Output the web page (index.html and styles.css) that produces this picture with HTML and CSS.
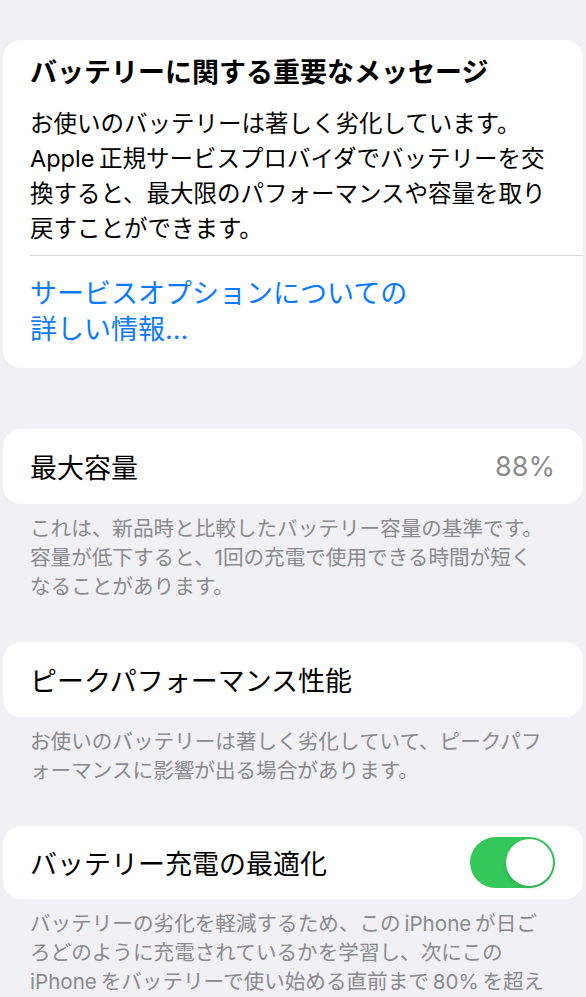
FILE: index.html
```html
<!DOCTYPE html>
<html lang="ja">
<head>
    <meta charset="UTF-8">
    <meta name="viewport" content="width=device-width, initial-scale=1.0">
    <title>バッテリーの状態と充電</title>
    <link rel="stylesheet" href="styles.css">
</head>
<body>
<div class="page">
    <section class="card notice">
        <h1 class="notice-title">バッテリーに関する重要なメッセージ</h1>
        <p class="notice-text">お使いのバッテリーは著しく劣化しています。<br>Apple 正規サービスプロバイダでバッテリーを交<br>換すると、最大限のパフォーマンスや容量を取り<br>戻すことができます。</p>
        <div class="separator"></div>
        <a class="notice-link" href="#">サービスオプションについての<br>詳しい情報…</a>
    </section>

    <section class="group group-capacity">
        <div class="card row">
            <span class="row-label">最大容量</span>
            <span class="row-value">88%</span>
        </div>
        <p class="footer">これは、新品時と比較したバッテリー容量の基準です。<br>容量が低下すると、1回の充電で使用できる時間が短く<br>なることがあります。</p>
    </section>

    <section class="group">
        <div class="card row">
            <span class="row-label">ピークパフォーマンス性能</span>
        </div>
        <p class="footer">お使いのバッテリーは著しく劣化していて、ピークパフ<br>ォーマンスに影響が出る場合があります。</p>
    </section>

    <section class="group">
        <div class="card row row-switch">
            <span class="row-label">バッテリー充電の最適化</span>
            <span class="toggle on"><span class="knob"></span></span>
        </div>
        <p class="footer">バッテリーの劣化を軽減するため、この iPhone が日ご<br>ろどのように充電されているかを学習し、次にこの<br>iPhone をバッテリーで使い始める直前まで 80% を超え</p>
    </section>
</div>
</body>
</html>
```

FILE: styles.css
```css
body {
    margin: 0;
    background-color: #f0f0f5;
    font-family: Inter, "Noto Sans CJK JP", sans-serif;
    color: #000;
}

.page {
    padding: 40px 3px 0;
}

.card {
    background-color: #fff;
    border-radius: 18px;
}

/* battery warning card */
.notice {
    padding: 15px 0 20px 27px;
}
.notice-title {
    margin: 0 27px 0 0;
    font-size: 27px;
    font-weight: 700;
    line-height: 36px;
    white-space: nowrap;
}
.notice-text {
    margin: 15px 0 0;
    font-size: 23.5px;
    line-height: 35px;
    word-spacing: -2px;
    white-space: nowrap;
}
.separator {
    height: 1px;
    margin-top: 9px;
    background-color: #d9d9dd;
}
.notice-link {
    display: block;
    margin-top: 20px;
    font-size: 27px;
    line-height: 36px;
    color: #0a7aff;
    text-decoration: none;
    white-space: nowrap;
}

/* setting rows */
.group {
    margin-top: 41px;
}
.group-capacity {
    margin-top: 61px;
}
.row {
    display: flex;
    align-items: center;
    justify-content: space-between;
    height: 75px;
    padding: 0 28px 0 27px;
}
.row-switch {
    height: 73px;
}
.row-label {
    font-size: 27px;
}
.row-value {
    font-size: 27px;
    color: #8a8a8e;
}

.toggle {
    position: relative;
    width: 85px;
    height: 51px;
    border-radius: 26px;
    background-color: #e9e9eb;
}
.toggle.on {
    background-color: #34c759;
}
.toggle .knob {
    position: absolute;
    top: 2px;
    left: 2px;
    width: 47px;
    height: 47px;
    border-radius: 50%;
    background-color: #fff;
    box-shadow: 0 2px 4px rgba(0, 0, 0, 0.15);
}
.toggle.on .knob {
    left: 36px;
}

.footer {
    margin: 0;
    padding: 10px 27px 0;
    font-size: 20.6px;
    line-height: 29px;
    color: #8a8a8e;
    word-spacing: -2px;
    white-space: nowrap;
}
```
